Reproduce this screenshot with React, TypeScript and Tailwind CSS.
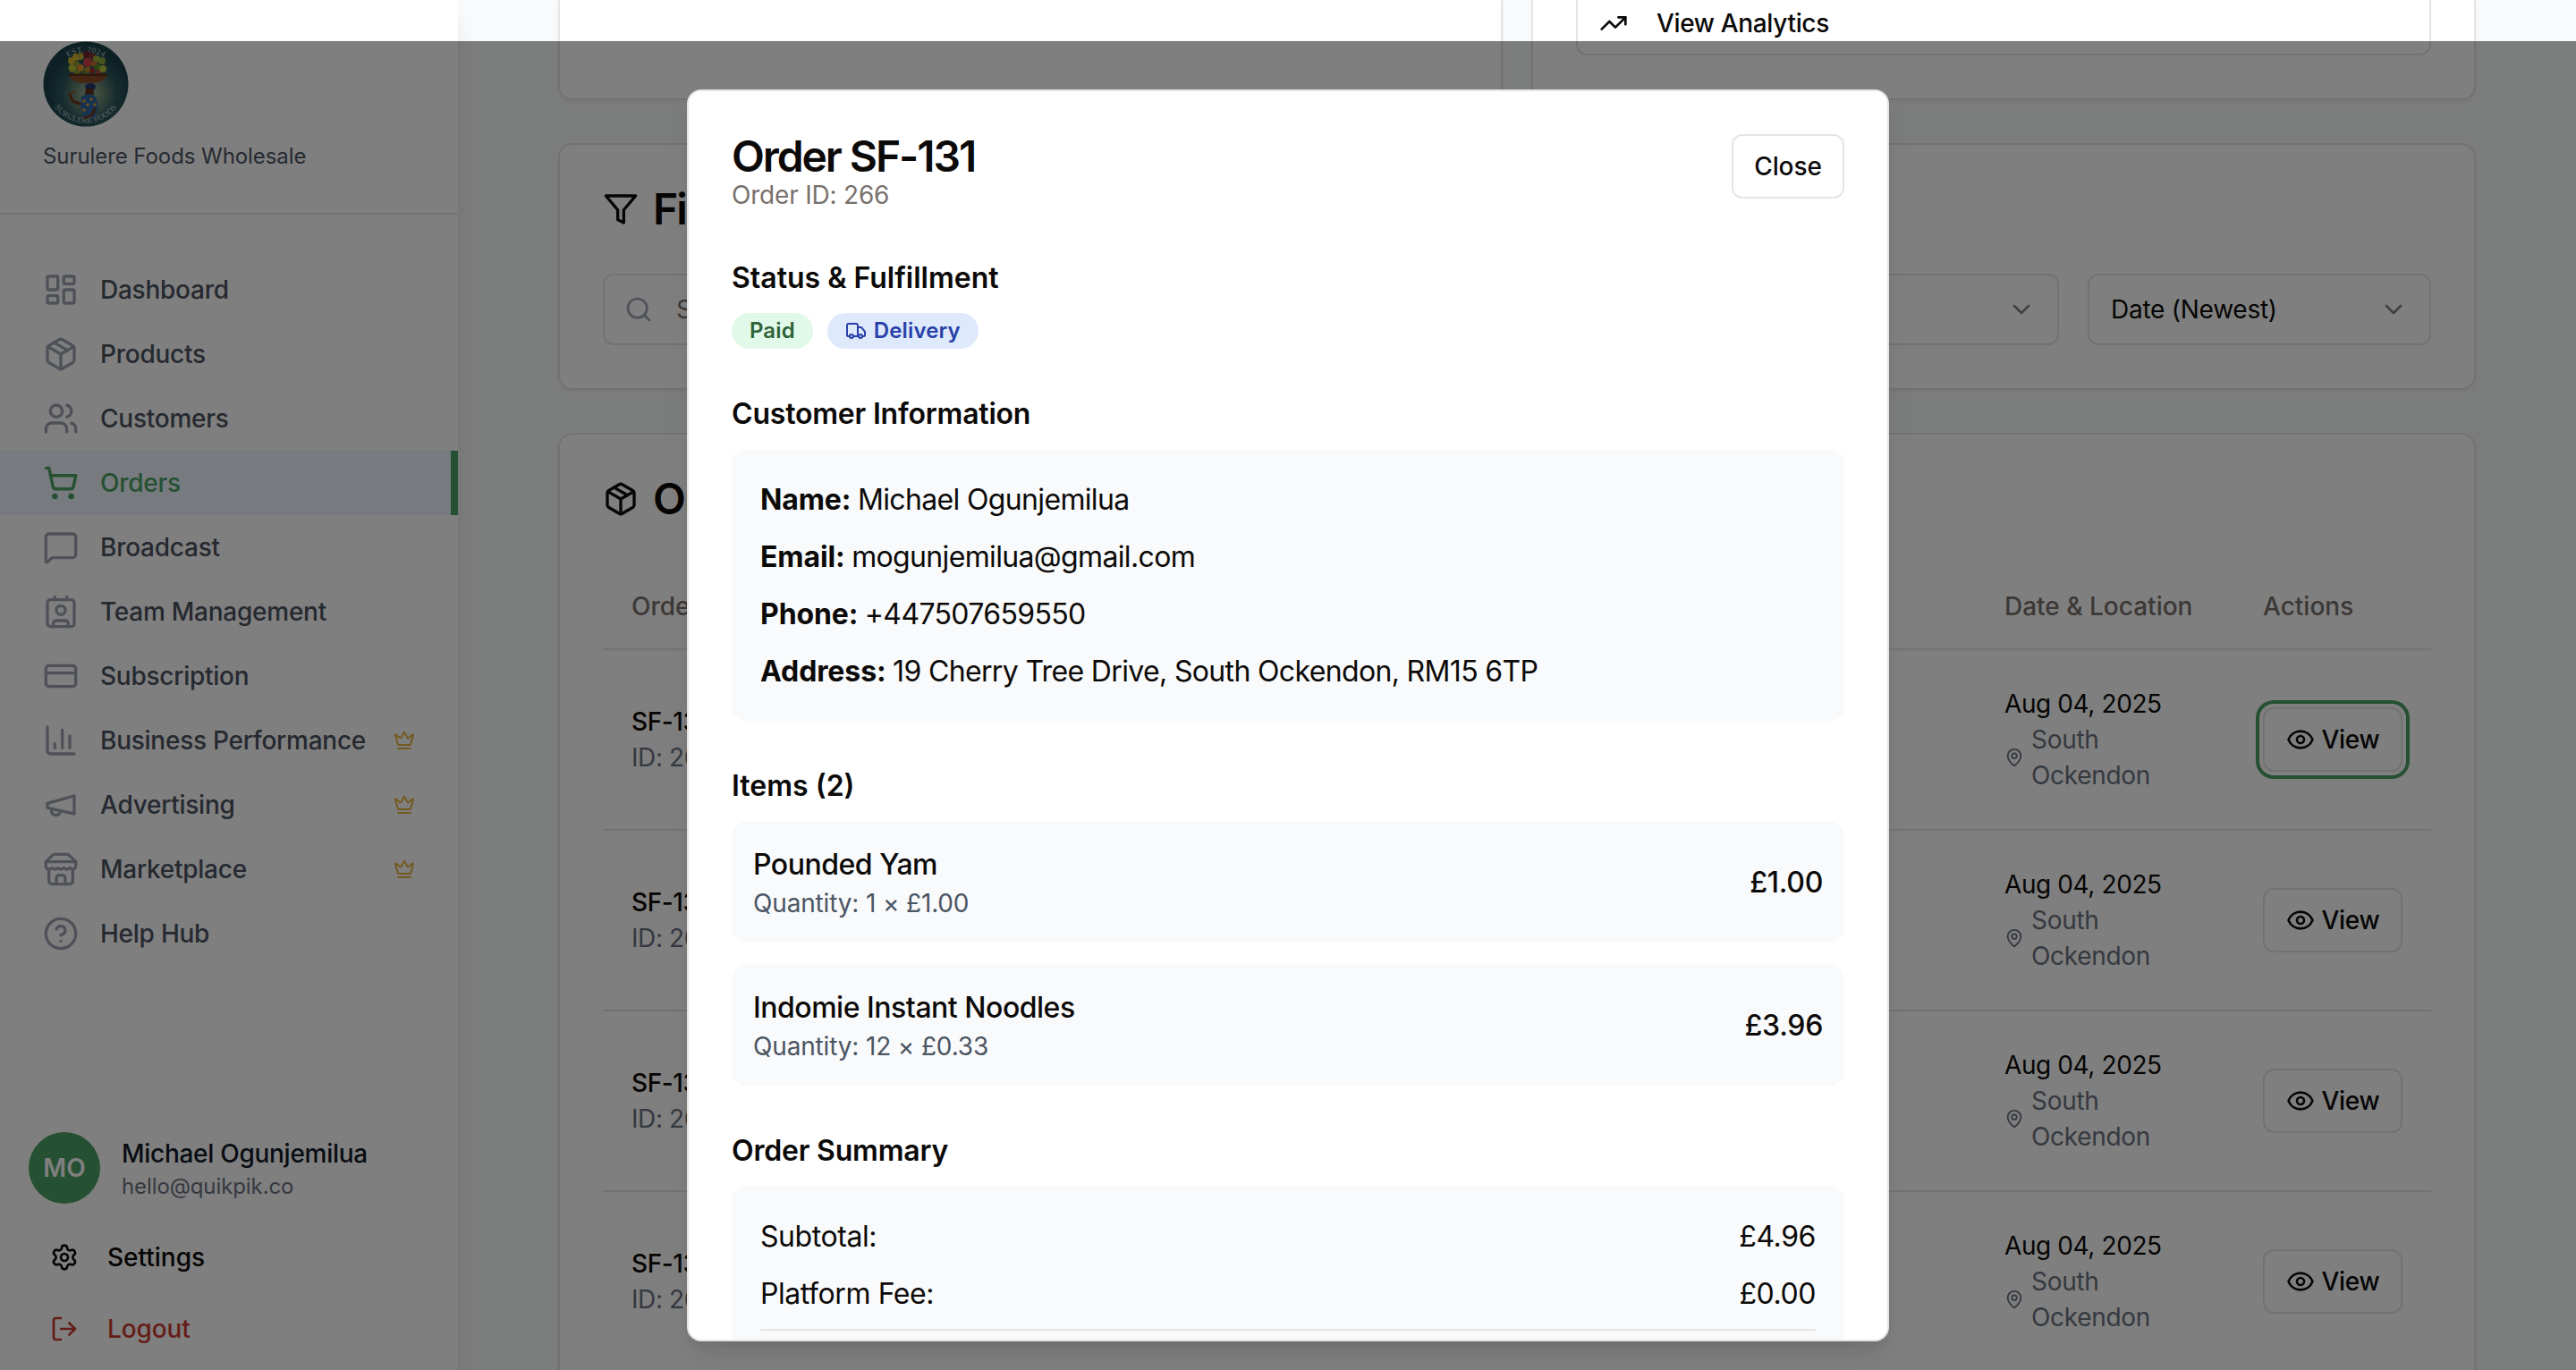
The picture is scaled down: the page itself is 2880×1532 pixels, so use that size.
import type { ReactNode } from "react";
import {
  LayoutDashboard, Package, Users, ShoppingCart, MessageSquare, CreditCard, Crown,
  Settings, Search, ChevronDown, Eye, MapPin, Truck, TrendingUp,
} from "lucide-react";

function Svg({ children, className }: { children: ReactNode; className?: string }) {
  return (
    <svg viewBox="0 0 24 24" fill="none" stroke="currentColor" strokeWidth={2} strokeLinecap="round" strokeLinejoin="round" className={className}>
      {children}
    </svg>
  );
}

const Contact = ({ className }: { className?: string }) => (
  <Svg className={className}>
    <path d="M16 2v2" /><path d="M7 22v-2a2 2 0 0 1 2-2h6a2 2 0 0 1 2 2v2" /><path d="M8 2v2" />
    <circle cx="12" cy="11" r="3" /><rect x="3" y="4" width="18" height="18" rx="2" />
  </Svg>
);
const Bars = ({ className }: { className?: string }) => (
  <Svg className={className}>
    <path d="M3 3v16a2 2 0 0 0 2 2h16" /><path d="M18 17V9" /><path d="M13 17V5" /><path d="M8 17v-3" />
  </Svg>
);
const Horn = ({ className }: { className?: string }) => (
  <Svg className={className}>
    <path d="m3 11 18-5v12L3 14v-3z" /><path d="M11.6 16.8a3 3 0 1 1-5.8-1.6" />
  </Svg>
);
const Shop = ({ className }: { className?: string }) => (
  <Svg className={className}>
    <path d="m2 7 4.41-4.41A2 2 0 0 1 7.83 2h8.34a2 2 0 0 1 1.42.59L22 7" />
    <path d="M4 12v8a2 2 0 0 0 2 2h12a2 2 0 0 0 2-2v-8" />
    <path d="M15 22v-4a2 2 0 0 0-2-2h-2a2 2 0 0 0-2 2v4" />
    <path d="M2 7h20" />
    <path d="M22 7v3a2 2 0 0 1-2 2a2.7 2.7 0 0 1-1.59-.63.7.7 0 0 0-.82 0A2.7 2.7 0 0 1 16 12a2.7 2.7 0 0 1-1.59-.63.7.7 0 0 0-.82 0A2.7 2.7 0 0 1 12 12a2.7 2.7 0 0 1-1.59-.63.7.7 0 0 0-.82 0A2.7 2.7 0 0 1 8 12a2.7 2.7 0 0 1-1.59-.63.7.7 0 0 0-.82 0A2.7 2.7 0 0 1 4 12a2 2 0 0 1-2-2V7" />
  </Svg>
);
const Help = ({ className }: { className?: string }) => (
  <Svg className={className}>
    <circle cx="12" cy="12" r="10" /><path d="M9.09 9a3 3 0 0 1 5.83 1c0 2-3 3-3 3" /><path d="M12 17h.01" />
  </Svg>
);
const Funnel = ({ className }: { className?: string }) => (
  <Svg className={className}><polygon points="22 3 2 3 10 12.46 10 19 14 21 14 12.46 22 3" /></Svg>
);
const Exit = ({ className }: { className?: string }) => (
  <Svg className={className}>
    <path d="M9 21H5a2 2 0 0 1-2-2V5a2 2 0 0 1 2-2h4" /><polyline points="16 17 21 12 16 7" /><line x1="21" x2="9" y1="12" y2="12" />
  </Svg>
);

const nav = [
  { label: "Dashboard", icon: LayoutDashboard },
  { label: "Products", icon: Package },
  { label: "Customers", icon: Users },
  { label: "Orders", icon: ShoppingCart, active: true },
  { label: "Broadcast", icon: MessageSquare },
  { label: "Team Management", icon: Contact },
  { label: "Subscription", icon: CreditCard },
  { label: "Business Performance", icon: Bars, premium: true },
  { label: "Advertising", icon: Horn, premium: true },
  { label: "Marketplace", icon: Shop, premium: true },
  { label: "Help Hub", icon: Help },
];

const fruit: [number, number, number, string][] = [
  [32, 22, 4, "#c9b52c"], [37, 18, 4, "#d8b02a"], [42, 17, 4, "#b8a830"], [49, 15, 4, "#7a2228"],
  [55, 17, 3.5, "#8a3030"], [60, 20, 4, "#9fae36"], [66, 22, 4, "#8fa83a"], [33, 30, 4.5, "#b9bd35"],
  [38, 26, 3.5, "#8a9a30"], [42, 30, 4, "#e0902c"], [50, 24, 5, "#d0454b"], [57, 25, 3.5, "#c07030"],
  [61, 29, 3.5, "#5f8d2e"], [67, 31, 4, "#b7c43b"], [50, 32, 3.5, "#b08a2d"], [55, 33, 3, "#a02d2a"],
  [46, 35, 2.5, "#5a8a30"], [38, 35, 3, "#8aa030"], [62, 35, 2.5, "#b04030"],
];

function Logo() {
  return (
    <svg viewBox="0 0 96 96" className="size-24">
      <defs>
        <radialGradient id="glow" cx="54%" cy="62%" r="50%">
          <stop offset="0" stopColor="#a3b08f" />
          <stop offset="0.3" stopColor="#6f8c78" />
          <stop offset="0.65" stopColor="#2d575b" />
          <stop offset="1" stopColor="#1b434b" />
        </radialGradient>
        <path id="arcTop" d="M12 48a36 36 0 0 1 72 0" />
        <path id="arcBottom" d="M4.5 48a43.5 43.5 0 0 0 87 0" />
      </defs>
      <circle cx="48" cy="48" r="47.5" fill="url(#glow)" />
      <text fontSize="9" fill="#b4c6c6" fontFamily="Liberation Serif" letterSpacing="0.5" textAnchor="middle">
        <textPath href="#arcTop" startOffset="50%">EST. 2024</textPath>
      </text>
      <text fontSize="9" fill="#b4c6c6" fontFamily="Liberation Serif" letterSpacing="0.2" textAnchor="middle">
        <textPath href="#arcBottom" startOffset="50%">SURULERE FOODS</textPath>
      </text>
      {fruit.map(([x, y, r, fill]) => <circle key={x + "-" + y} cx={x} cy={y} r={r} fill={fill} />)}
      <path d="M29 37h43c-1 7-9 10-21.500 10S30 44 29 37z" fill="#8a4a26" />
      <path d="M29 36.500h43v2.500H29z" fill="#5c2f16" />
      <path d="M47 50c3-4 10-4 12 0l-1 4c-3 2-8 2-10 0z" fill="#22366e" />
      <path d="M48 53h8l1 7-3 4h-4l-3-5z" fill="#5e2e1c" />
      <path d="M43 62c6-4 14-4 17 2l2 10-4 12-13-2-3-12z" fill="#2f66a0" />
      <circle cx="46" cy="67" r="1.800" fill="#d99a3a" /><circle cx="54" cy="65" r="1.800" fill="#d99a3a" />
      <circle cx="50" cy="71" r="1.800" fill="#d99a3a" /><circle cx="58" cy="71" r="1.800" fill="#d99a3a" />
      <circle cx="46" cy="77" r="1.800" fill="#d99a3a" />
      <path d="M41 70l-8-3-3-8M58 76l-3 6-8 4" stroke="#6a3420" strokeWidth="3" fill="none" strokeLinecap="round" strokeLinejoin="round" />
      <path d="M29 60l7-4" stroke="#8a4a22" strokeWidth="1.500" strokeLinecap="round" />
    </svg>
  );
}

function Sidebar() {
  return (
    <aside className="relative z-10 flex w-[512px] shrink-0 flex-col bg-white shadow-[0_20px_30px_-6px_rgba(0,0,0,0.1),0_8px_12px_-8px_rgba(0,0,0,0.1)]">
      <div className="flex h-[240px] shrink-0 flex-col border-b-2 border-[#e5e5e5] px-12 pt-[46px]">
        <Logo />
        <p className="mt-[17px] text-2xl leading-8 tracking-[-0.07px] text-[#4b5563]">Surulere Foods Wholesale</p>
      </div>
      <nav className="mt-12 flex flex-col">
        {nav.map(({ label, icon: Icon, active, premium }) => (
          <div
            key={label}
            className={
              "flex h-[72px] items-center gap-6 px-12 text-[28px] font-medium tracking-[-0.25px] " +
              (active ? "border-r-8 border-[#4aa164] bg-[#eff6ff] text-[#4aa164]" : "text-[#4b5260]")
            }
          >
            <Icon className={"size-10 shrink-0 " + (active ? "" : "text-[#9ca3af]")} />
            <span className="flex-1 whitespace-nowrap">{label}</span>
            {premium && <Crown className="size-6 text-[#e6b43c]" />}
          </div>
        ))}
      </nav>
      <div className="mt-auto px-8 pb-[10px]">
        <div className="flex items-center gap-6">
          <div className="flex size-20 items-center justify-center rounded-full bg-[#4aa164] text-[28px] font-semibold text-white">MO</div>
          <div>
            <p className="text-[28px] font-medium leading-10 tracking-[-0.28px] text-[#111827]">Michael Ogunjemilua</p>
            <p className="pt-px text-2xl leading-[31px] tracking-[-0.1px] text-[#6b7280]">hello@quikpik.co</p>
          </div>
        </div>
        <div className="mt-6 flex h-[72px] items-center gap-8 px-6 text-[28px] font-medium text-[#0c0a09]">
          <Settings className="size-8" />Settings
        </div>
        <div className="mt-2 flex h-[72px] items-center gap-8 px-6 text-[28px] font-medium tracking-[-0.1px] text-[#cb3a31]">
          <Exit className="size-8" />Logout
        </div>
      </div>
    </aside>
  );
}

const cardCls = "border-2 border-[#e7e5e4] bg-white shadow-[0_2px_4px_rgba(0,0,0,0.06)]";
const cols = "grid grid-cols-[1535px_289px_220px]";

function OrderRow({ focused }: { focused?: boolean }) {
  return (
    <div className={cols + " h-[202px] items-center border-b-2 border-[#e7e5e4] text-[28px] leading-10"}>
      <div className="px-8 tracking-[-0.4px]">
        <p className="font-medium text-[#0c0a09]">SF-131</p>
        <p className="text-[#6b7280]">ID: 266</p>
      </div>
      <div className="pl-8">
        <p className="tracking-[-0.4px] text-[#0c0a09]">Aug 04, 2025</p>
        <div className="flex items-center gap-2 tracking-[-0.3px] text-[#6b7280]">
          <MapPin className="size-[22px] shrink-0" />
          <p>South<br />Ockendon</p>
        </div>
      </div>
      <div className="pl-8">
        <button
          className={
            "flex h-[72px] w-[156px] items-center justify-center gap-2 rounded-xl border-2 border-[#e7e5e4] bg-white font-medium tracking-[-0.3px] text-[#0c0a09] " +
            (focused ? "shadow-[0_0_0_4px_#fff,0_0_0_8px_#4aa164]" : "")
          }
        >
          <Eye className="size-8" />View
        </button>
      </div>
    </div>
  );
}

function Select({ label }: { label: string }) {
  return (
    <div className="flex h-20 w-96 items-center justify-between rounded-xl border-2 border-[#e7e5e4] px-6 tracking-[-0.25px]">
      <span>{label}</span>
      <ChevronDown className="size-8 opacity-50" />
    </div>
  );
}

function Main() {
  return (
    <main className="flex w-[2368px] flex-col gap-12 px-28">
      <div className="grid shrink-0 grid-cols-2 gap-8">
        <div className={cardCls + " h-28 rounded-b-2xl border-t-0"} />
        <div className={cardCls + " h-28 rounded-b-2xl border-t-0 px-12"}>
          <button className="flex h-[62px] w-full items-center gap-8 rounded-b-xl border-2 border-t-0 border-[#e7e5e4] px-6 pb-2 text-[28px] font-medium tracking-[-0.35px] text-[#0c0a09]">
            <TrendingUp className="size-8" />View Analytics
          </button>
        </div>
      </div>

      <section className={cardCls + " h-[276px] shrink-0 rounded-2xl px-12 pt-12"}>
        <h2 className="flex items-center gap-4 text-5xl font-semibold leading-none tracking-[-0.04em] text-[#0c0a09]">
          <Funnel className="size-10" /><span>Filters</span>
        </h2>
        <div className="mt-12 flex gap-8 text-[28px] text-[#0c0a09]">
          <div className="flex h-20 flex-1 items-center gap-[26px] rounded-xl border-2 border-[#e7e5e4] px-[22px] text-[#78716c]">
            <Search className="size-8 text-[#9ca3af]" />Search orders...
          </div>
          <Select label="All Status" />
          <Select label="Date (Newest)" />
        </div>
      </section>

      <section className={cardCls + " h-[1200px] shrink-0 rounded-2xl px-12 pt-12"}>
        <h2 className="flex items-center gap-4 text-5xl font-semibold leading-none tracking-[-0.04em] text-[#0c0a09]">
          <Package className="size-10" /><span>Orders</span>
        </h2>
        <div className={cols + " mt-12 h-[97px] items-center border-b-2 border-[#e7e5e4] text-[28px] font-medium text-[#78716c]"}>
          <span className="pl-8">Order</span>
          <span className="pl-8">Date &amp; Location</span>
          <span className="pl-8">Actions</span>
        </div>
        <OrderRow focused />
        <OrderRow />
        <OrderRow />
        <OrderRow />
      </section>
    </main>
  );
}

function Item({ name, qty, price }: { name: string; qty: string; price: string }) {
  return (
    <div className="flex h-[136px] items-center justify-between rounded-2xl bg-[#f9fafb] px-6 pt-px">
      <div>
        <p className="font-medium tracking-[-0.48px]">{name}</p>
        <p className="text-[28px] leading-[39px] tracking-[-0.16px] text-[#4b5563]">{qty}</p>
      </div>
      <p className="font-medium tracking-[-0.3px]">{price}</p>
    </div>
  );
}

function Field({ label, value }: { label: string; value: string }) {
  return <p className="tracking-[-0.65px]"><strong className="font-bold tracking-[-0.1px]">{label} </strong>{value}</p>;
}

function Line({ label, value }: { label: string; value: string }) {
  return <div className="flex justify-between tracking-[-0.43px]"><span>{label}</span><span>{value}</span></div>;
}

const Heading = ({ children }: { children: ReactNode }) => (
  <h3 className="mb-[15px] pt-px font-semibold tracking-[-0.2px]">{children}</h3>
);

function Modal() {
  return (
    <div className="absolute left-[768px] top-[100px] z-30 flex h-[1400px] w-[1344px] flex-col gap-12 overflow-hidden rounded-2xl border-2 border-[#e7e5e4] bg-white p-12 text-[32px] leading-[48px] text-[#0c0a09] shadow-[0_20px_30px_-6px_rgba(0,0,0,0.1),0_8px_12px_-8px_rgba(0,0,0,0.1)]">
      <header className="flex h-[88px] shrink-0 items-start justify-between">
        <div>
          <h1 className="pt-px text-5xl font-semibold leading-[47px] tracking-[-2.1px]">Order SF-131</h1>
          <p className="pt-px text-[28px] leading-[39px] tracking-[-0.2px] text-[#78716c]">Order ID: 266</p>
        </div>
        <button className="h-[72px] w-[126px] rounded-xl border-2 border-[#e7e5e4] text-[28px] font-medium leading-10 tracking-[-0.1px]">Close</button>
      </header>
      <section className="shrink-0">
        <Heading><span className="tracking-normal">Status &amp; Fulfillment</span></Heading>
        <div className="flex gap-4 text-2xl font-semibold leading-8">
          <span className="flex h-10 items-center rounded-full bg-[#e1f9e8] px-5 tracking-[0.1px] text-[#306339]">Paid</span>
          <span className="flex h-10 items-center gap-2 rounded-full bg-[#dee9fc] px-5 tracking-[0.15px] text-[#2840a8]">
            <Truck className="size-6" />Delivery
          </span>
        </div>
      </section>
      <section className="shrink-0">
        <Heading>Customer Information</Heading>
        <div className="flex flex-col gap-4 rounded-2xl bg-[#f9fafb] px-8 pb-[31px] pt-[33px]">
          <Field label="Name:" value="Michael Ogunjemilua" />
          <Field label="Email:" value="mogunjemilua@gmail.com" />
          <Field label="Phone:" value="+447507659550" />
          <Field label="Address:" value="19 Cherry Tree Drive, South Ockendon, RM15 6TP" />
        </div>
      </section>
      <section className="shrink-0">
        <Heading><span className="tracking-normal">Items (2)</span></Heading>
        <div className="flex flex-col gap-6">
          <Item name="Pounded Yam" qty="Quantity: 1 × £1.00" price="£1.00" />
          <Item name="Indomie Instant Noodles" qty="Quantity: 12 × £0.33" price="£3.96" />
        </div>
      </section>
      <section className="shrink-0">
        <Heading>Order Summary</Heading>
        <div className="flex h-[300px] flex-col gap-4 rounded-2xl bg-[#f9fafb] px-8 pt-[33px]">
          <Line label="Subtotal:" value="£4.96" />
          <Line label="Platform Fee:" value="£0.00" />
          <div className="-mt-px h-0.5 bg-[#e7e5e4]" />
        </div>
      </section>
    </div>
  );
}

export default function App() {
  return (
    <div className="relative h-[1532px] w-[2880px] overflow-hidden bg-[linear-gradient(#f9fafc_46px,#f7faf8_46px)] font-['Inter',sans-serif] antialiased">
      <div className="flex h-full">
        <Sidebar />
        <Main />
      </div>
      <div className="absolute inset-x-0 bottom-0 top-[46px] z-20 bg-black/50" />
      <Modal />
    </div>
  );
}
